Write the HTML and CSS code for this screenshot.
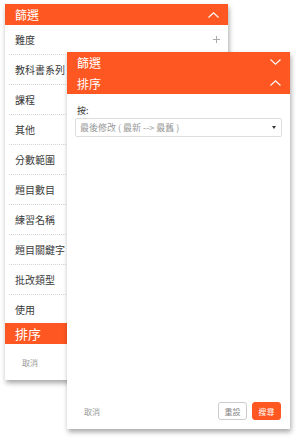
FILE: index.html
```html
<!DOCTYPE html>
<html lang="zh-Hant">
<head>
  <meta charset="UTF-8">
  <title>篩選</title>
  <link rel="stylesheet" href="styles.css">
</head>
<body>
<div class="desk">

  <div class="panel back">
    <div class="bar">
      <span>篩選</span>
      <svg class="chev" width="11" height="6" viewBox="0 0 11 6"><polyline points="0.5,5.5 5.5,0.8 10.5,5.5"/></svg>
    </div>
    <ul class="rows">
      <li><span>難度</span><svg class="plus" width="7" height="7" viewBox="0 0 7 7"><path d="M3.5 0v7M0 3.5h7"/></svg></li>
      <li>教科書系列</li>
      <li>課程</li>
      <li>其他</li>
      <li>分數範圍</li>
      <li>題目數目</li>
      <li>練習名稱</li>
      <li>題目關鍵字</li>
      <li>批改類型</li>
      <li class="last">使用</li>
    </ul>
    <div class="bar big">排序</div>
    <div class="cancel">取消</div>
  </div>

  <div class="panel front">
    <div class="bar thin">
      <span>篩選</span>
      <svg class="chev" width="11" height="6" viewBox="0 0 11 6"><polyline points="0.5,0.5 5.5,5.2 10.5,0.5"/></svg>
    </div>
    <div class="bar">
      <span>排序</span>
      <svg class="chev" width="11" height="6" viewBox="0 0 11 6"><polyline points="0.5,5.5 5.5,0.8 10.5,5.5"/></svg>
    </div>
    <div class="sortbody">
      <label class="lbl">按:</label>
      <div class="select">
        <span>最後修改 ( 最新 --&gt; 最舊 )</span>
        <i class="caret"></i>
      </div>
    </div>
    <div class="foot">
      <span class="cancel">取消</span>
      <div class="btns">
        <button class="btn ghost">重設</button>
        <button class="btn solid">搜尋</button>
      </div>
    </div>
  </div>

</div>
</body>
</html>
```

FILE: styles.css
```css
* {
  box-sizing: border-box;
}

body {
  margin: 0;
  background: #fff;
  font-family: "Noto Sans CJK TC", "Noto Sans", sans-serif;
  color: #333;
}

.desk {
  position: relative;
  width: 300px;
  height: 438px;
  padding: 4px 0 0 5px;
}

.panel {
  background: #fff;
  box-shadow: 1px 3px 5px rgba(0,0,0,0.35);
}

.back {
  width: 223px;
  height: 376px;
}

/* the open sort window sits on top of the filter list */
.front {
  position: absolute;
  left: 67px;
  top: 52px;
  width: 223px;
  height: 377px;
  display: flex;
  flex-direction: column;
}

.bar {
  background: #ff5722;
  color: #fff;
  height: 21px;
  padding: 0 9px 0 10px;
  font-size: 12px;
  display: flex;
  align-items: center;
  justify-content: space-between;
}

.bar.big {
  height: 21px;
  font-size: 13px;
}

.front .bar {
  height: 22px;
}

.front .bar.thin {
  height: 20px;
}

.chev polyline {
  fill: none;
  stroke: #fff;
  stroke-width: 1.1;
}

.rows {
  list-style: none;
  margin: 0;
  padding: 0 0 0 4px;
}

.rows li {
  height: 30px;
  padding: 0 8px 0 6px;
  border-bottom: 1px dotted #d4d4d4;
  font-size: 10px;
  color: #3a3a3a;
  display: flex;
  align-items: center;
  justify-content: space-between;
}

.rows li.last {
  height: 28px;
  border-bottom: none;
}

.plus path {
  stroke: #aaa;
  stroke-width: 1;
}

.back .cancel {
  font-size: 8px;
  color: #999;
  padding: 13px 0 0 17px;
}

.sortbody {
  padding: 10px 8px 0 8px;
}

.lbl {
  display: block;
  font-size: 9px;
  color: #333;
  margin-bottom: 1px;
  padding-left: 2px;
}

.select {
  height: 19px;
  border: 1px solid #ddd;
  border-radius: 2px;
  display: flex;
  align-items: center;
  justify-content: space-between;
  padding: 0 5px 0 4px;
  font-size: 9px;
  color: #999;
}

.caret {
  width: 0;
  height: 0;
  border-left: 2.5px solid transparent;
  border-right: 2.5px solid transparent;
  border-top: 3px solid #333;
}

.foot {
  margin-top: auto;
  padding: 0 9px 9px 17px;
  display: flex;
  align-items: center;
  justify-content: space-between;
}

.foot .cancel {
  font-size: 8px;
  color: #999;
}

.btns {
  display: flex;
  gap: 5px;
}

.btn {
  width: 29px;
  height: 18px;
  padding: 0;
  border-radius: 3px;
  font-family: inherit;
  font-size: 8px;
}

.ghost {
  background: #fff;
  border: 1px solid #ccc;
  color: #888;
}

.solid {
  background: #ff5722;
  border: 1px solid #ff5722;
  color: #fff;
}
```
